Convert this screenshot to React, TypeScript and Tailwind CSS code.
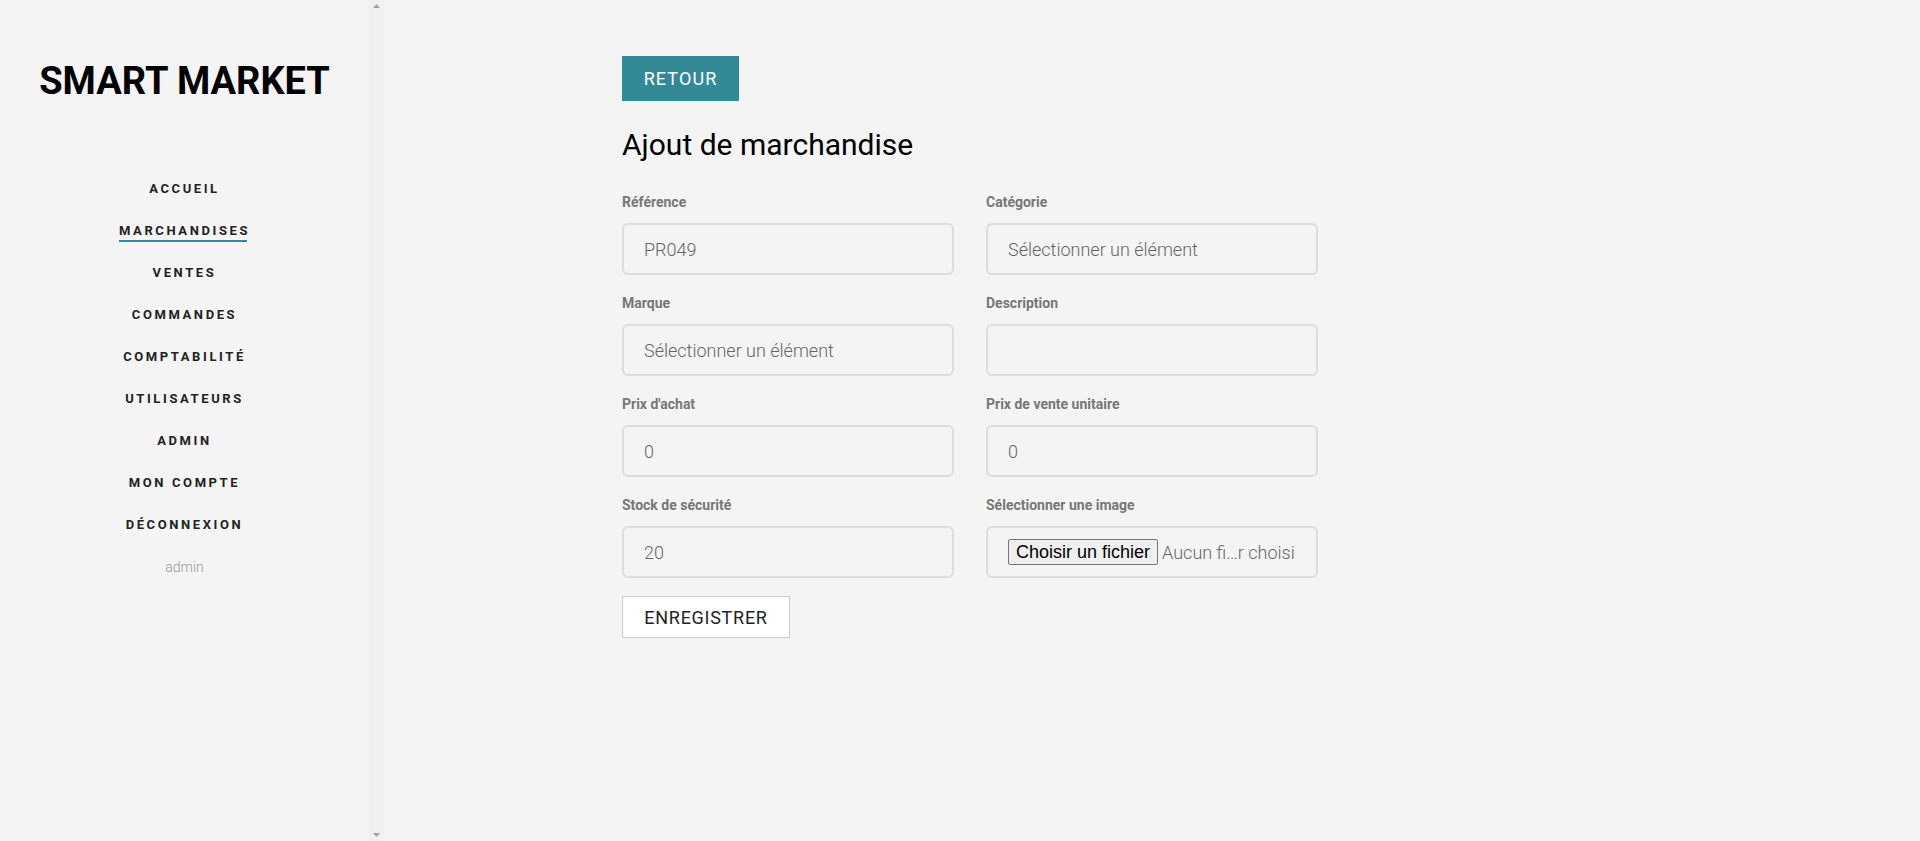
import type { ReactNode } from "react";

const navItems = [
  "Accueil",
  "Marchandises",
  "Ventes",
  "Commandes",
  "Comptabilité",
  "Utilisateurs",
  "Admin",
  "Mon compte",
  "Déconnexion",
];

function Field({ label, children }: { label: string; children: ReactNode }) {
  return (
    <div className="flex flex-col">
      <label className="text-[14px] leading-5 font-bold text-[#777] mb-[11px]">{label}</label>
      {children}
      <div className="h-[18px]" />
    </div>
  );
}

function TextBox({ value }: { value?: string }) {
  return (
    <div className="h-[52px] border-2 border-[#dcdcdc] rounded-[6px] px-[20px] flex items-center text-[18px] font-light text-[#666]">
      {value}
    </div>
  );
}

// sidebar scroll track drawn by hand (headless browser hides scrollbars)
function ScrollTrack() {
  return (
    <div className="w-[15px] h-full bg-[#f0f0f0] flex flex-col justify-between items-center py-[4px]">
      <svg width="7" height="4" viewBox="0 0 7 4">
        <path d="M3.5 0 L7 4 L0 4 Z" fill="#a3a3a3" />
      </svg>
      <svg width="7" height="4" viewBox="0 0 7 4">
        <path d="M0 0 L7 0 L3.5 4 Z" fill="#a3a3a3" />
      </svg>
    </div>
  );
}

export default function App() {
  return (
    <div className="flex h-screen bg-[#f4f4f4] font-['Roboto',sans-serif]">
      <aside className="w-[384px] shrink-0 h-screen flex">
        <div className="flex-1 flex flex-col items-center">
          <h1 className="mt-[58px] text-[38px] leading-[46px] font-bold text-black">SMART MARKET</h1>
          <nav className="mt-[64px] flex flex-col items-center">
            {navItems.map((item) => (
              <a
                key={item}
                className={
                  "h-[42px] flex items-center uppercase text-[13px] font-bold tracking-[0.2em] text-[#222] " +
                  (item === "Marchandises" ? "relative" : "")
                }
              >
                {item}
                {item === "Marchandises" && (
                  <span className="absolute left-0 right-[3px] top-[30px] h-[2px] bg-[#338a96]" />
                )}
              </a>
            ))}
            <span className="h-[42px] flex items-center text-[14px] font-light text-[#999]">admin</span>
          </nav>
        </div>
        <ScrollTrack />
      </aside>

      <main className="flex-1 pl-[238px] pt-[56px]">
        <button className="h-[45px] w-[117px] bg-[#338a96] text-white text-[18px] tracking-[0.06em]">RETOUR</button>
        <h2 className="mt-[26px] text-[30px] leading-9 text-black">Ajout de marchandise</h2>

        <div className="mt-[29px] grid grid-cols-[332px_332px] gap-x-[32px]">
          <Field label="Référence">
            <TextBox value="PR049" />
          </Field>
          <Field label="Catégorie">
            <TextBox value="Sélectionner un élément" />
          </Field>
          <Field label="Marque">
            <TextBox value="Sélectionner un élément" />
          </Field>
          <Field label="Description">
            <TextBox />
          </Field>
          <Field label="Prix d'achat">
            <TextBox value="0" />
          </Field>
          <Field label="Prix de vente unitaire">
            <TextBox value="0" />
          </Field>
          <Field label="Stock de sécurité">
            <TextBox value="20" />
          </Field>
          <Field label="Sélectionner une image">
            <div className="h-[52px] border-2 border-[#dcdcdc] rounded-[6px] px-[20px] flex items-center">
              <span className="h-[26px] px-[7px] flex items-center border border-[#767676] rounded-[2px] bg-[#efefef] text-[18px] text-black font-['Liberation_Sans',Arial,sans-serif]">
                Choisir un fichier
              </span>
              <span className="ml-[4px] text-[18px] font-light text-[#666]">Aucun fi…r choisi</span>
            </div>
          </Field>
        </div>

        <button className="mt-0 h-[42px] w-[168px] bg-white border border-[#ccc] text-[18px] text-[#222] tracking-[0.04em]">
          ENREGISTRER
        </button>
      </main>
    </div>
  );
}
